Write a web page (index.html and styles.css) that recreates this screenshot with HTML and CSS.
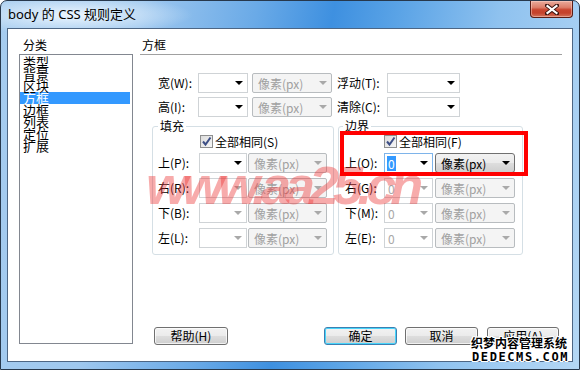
FILE: index.html
```html
<!DOCTYPE html>
<html lang="zh-CN">
<head>
<meta charset="utf-8">
<title>body 的 CSS 规则定义</title>
<link rel="stylesheet" href="styles.css">
</head>
<body>
<div class="window">
  <div class="titlebar">
    <span class="title">body 的 CSS 规则定义</span>
    <div class="close">
      <svg width="14" height="11" viewBox="0 0 14 11">
        <path d="M2 1.5 L12 9.5 M12 1.5 L2 9.5" stroke="#3a1410" stroke-width="4" stroke-linecap="square"/>
        <path d="M2.5 2 L11.5 9 M11.5 2 L2.5 9" stroke="#ffffff" stroke-width="2.2" stroke-linecap="square"/>
      </svg>
    </div>
  </div>
  <div class="client">
    <div class="side">
      <div class="cap">分类</div>
      <ul class="list">
        <li>类型</li>
        <li>背景</li>
        <li>区块</li>
        <li class="sel">方框</li>
        <li>边框</li>
        <li>列表</li>
        <li>定位</li>
        <li>扩展</li>
      </ul>
    </div>
    <div class="main">
      <div class="heading">方框</div>
      <div class="toprows">
        <div class="row">
          <span class="lbl">宽(W):</span>
          <span class="combo"><i class="arrow"></i></span>
          <span class="unit"><span>像素(px)</span><i class="arrow gray"></i></span>
          <span class="lbl lbl2">浮动(T):</span>
          <span class="combo combo-wide"><i class="arrow"></i></span>
        </div>
        <div class="row">
          <span class="lbl">高(I):</span>
          <span class="combo"><i class="arrow"></i></span>
          <span class="unit"><span>像素(px)</span><i class="arrow gray"></i></span>
          <span class="lbl lbl2">清除(C):</span>
          <span class="combo combo-wide"><i class="arrow"></i></span>
        </div>
      </div>
      <div class="groups">
        <fieldset class="group group-pad">
          <legend>填充</legend>
          <div class="chkrow"><span class="chk"><svg width="13" height="13" viewBox="0 0 13 13"><path d="M3 6.5 L5.5 9.5 L10.5 2.5" fill="none" stroke="#3d4f86" stroke-width="2"/></svg></span><span>全部相同(S)</span></div>
          <div class="row"><span class="lbl">上(P):</span><span class="combo"><i class="arrow"></i></span><span class="unit"><span>像素(px)</span><i class="arrow gray"></i></span></div>
          <div class="row"><span class="lbl">右(R):</span><span class="combo"><i class="arrow gray"></i></span><span class="unit"><span>像素(px)</span><i class="arrow gray"></i></span></div>
          <div class="row"><span class="lbl">下(B):</span><span class="combo"><i class="arrow gray"></i></span><span class="unit"><span>像素(px)</span><i class="arrow gray"></i></span></div>
          <div class="row"><span class="lbl">左(L):</span><span class="combo"><i class="arrow gray"></i></span><span class="unit"><span>像素(px)</span><i class="arrow gray"></i></span></div>
        </fieldset>
        <fieldset class="group group-mar">
          <legend>边界</legend>
          <div class="chkrow"><span class="chk"><svg width="13" height="13" viewBox="0 0 13 13"><path d="M3 6.5 L5.5 9.5 L10.5 2.5" fill="none" stroke="#3d4f86" stroke-width="2"/></svg></span><span>全部相同(F)</span></div>
          <div class="row"><span class="lbl">上(O):</span><span class="combo combo-focus"><span class="hl">0</span><i class="arrow"></i></span><span class="unit unit-on"><span>像素(px)</span><i class="arrow"></i></span></div>
          <div class="row"><span class="lbl">右(G):</span><span class="combo"><span class="val">0</span><i class="arrow gray"></i></span><span class="unit"><span>像素(px)</span><i class="arrow gray"></i></span></div>
          <div class="row"><span class="lbl">下(M):</span><span class="combo"><span class="val">0</span><i class="arrow gray"></i></span><span class="unit"><span>像素(px)</span><i class="arrow gray"></i></span></div>
          <div class="row"><span class="lbl">左(E):</span><span class="combo"><span class="val">0</span><i class="arrow gray"></i></span><span class="unit"><span>像素(px)</span><i class="arrow gray"></i></span></div>
        </fieldset>
      </div>
      <div class="buttons">
        <span class="btn btn-help">帮助(H)</span>
        <span class="btn btn-ok">确定</span>
        <span class="btn btn-cancel">取消</span>
        <span class="btn btn-apply">应用(A)</span>
      </div>
    </div>
  </div>
</div>
<div class="mark-red">www.aa25.cn</div>
<div class="annot"></div>
<div class="dede">
  <div class="dede-cn">织梦内容管理系统</div>
  <div class="dede-en">DEDECMS.COM</div>
</div>
</body>
</html>
```
FILE: styles.css
```css
* { box-sizing: border-box; }
html, body { margin: 0; padding: 0; }
body {
  width: 580px;
  height: 370px;
  overflow: hidden;
  position: relative;
  background: #fff;
  font-family: "Noto Sans CJK SC", "Noto Sans", sans-serif;
  font-size: 12px;
  color: #000;
}

.window {
  width: 580px;
  height: 370px;
  border: 1px solid #27384c;
  border-radius: 7px 7px 0 0;
  padding: 0 6px 7px 6px;
  display: flex;
  flex-direction: column;
  background:
    radial-gradient(ellipse 120px 20px at 72px 14px, rgba(240,248,255,0.95), rgba(240,248,255,0) 100%),
    linear-gradient(100deg, #a6ccef 0%, #9fc8ef 22%, #6aaae7 40%, #3e90e0 52%, #5aa3e6 62%, #8fc2ef 78%, #a8d0f3 92%, #b4d7f4 100%);
}

.titlebar {
  height: 27px;
  display: flex;
  align-items: flex-start;
  justify-content: space-between;
  flex: none;
}
.title {
  align-self: center;
  padding-left: 1px;
  font-family: "Noto Sans", "Noto Sans CJK SC", sans-serif;
  font-size: 13px;
  line-height: 27px;
  color: #000;
}
.close {
  width: 43px;
  height: 17px;
  border: 1px solid #5a1d16;
  border-top: none;
  border-radius: 0 0 4px 4px;
  background: linear-gradient(#e9ab9c 0%, #dc7e6a 40%, #c8452f 55%, #c5422c 75%, #d2735c 100%);
  box-shadow: inset 0 0 0 1px rgba(255,220,210,0.45);
  display: flex;
  align-items: center;
  justify-content: center;
}

.client {
  height: 334px;
  border: 1px solid #4d6684;
  background: #fff;
  display: flex;
  flex: none;
}

.side {
  width: 114px;
  margin-left: 11px;
  padding-top: 9px;
  display: flex;
  flex-direction: column;
}
.cap {
  line-height: 14px;
  padding-left: 4px;
  margin-bottom: 2px;
}
.list {
  margin: 0;
  padding: 1px 1px 1px 0;
  list-style: none;
  height: 290px;
  border: 1px solid #828790;
}
.list li {
  font-size: 13px;
  line-height: 12px;
  height: 12px;
  padding-left: 3px;
  margin-right: 1px;
  white-space: nowrap;
}
.list li.sel {
  background: #3399ff;
  color: #fff;
}

.main {
  width: 422px;
  margin-left: 7px;
  padding-top: 9px;
  display: flex;
  flex-direction: column;
}
.heading {
  line-height: 14px;
  padding-left: 2px;
  padding-bottom: 2px;
  border-bottom: 1px solid #a0a0a0;
}

.toprows {
  margin-top: 18px;
  padding-left: 18px;
  display: flex;
  flex-direction: column;
  gap: 4px;
}
.row {
  display: flex;
  align-items: center;
  height: 20px;
}
.lbl {
  width: 40px;
  flex: none;
  white-space: nowrap;
  line-height: 20px;
}
.lbl2 {
  width: 50px;
  margin-left: 5px;
}
.combo {
  width: 50px;
  height: 20px;
  flex: none;
  border: 1px solid #cfd3d6;
  background: #fff;
  display: flex;
  align-items: center;
  padding: 0 4px 0 2px;
}
.combo-wide { width: 73px; }
.combo .arrow { margin-left: auto; }
.combo-focus { border-color: #7eb4ea; }
.hl {
  background: #3399ff;
  color: #fff;
  line-height: 15px;
  padding: 0 1px;
}
.val {
  color: #a8a8a8;
  padding-left: 1px;
}
.arrow {
  display: block;
  width: 0;
  height: 0;
  border-left: 4px solid transparent;
  border-right: 4px solid transparent;
  border-top: 4px solid #000;
}
.arrow.gray { border-top-color: #a9a9a9; }

.unit {
  width: 80px;
  height: 20px;
  flex: none;
  margin-left: 4px;
  border: 1px solid #b8bcbf;
  border-radius: 2px;
  background: #f4f4f4;
  color: #a0a0a0;
  display: flex;
  align-items: center;
  justify-content: space-between;
  padding: 0 4px 0 5px;
  white-space: nowrap;
}
.unit-on {
  border-color: #707070;
  border-radius: 3px;
  color: #000;
  background: linear-gradient(#f2f2f2 0%, #ebebeb 48%, #dddddd 52%, #cfcfcf 100%);
}

.groups {
  margin-top: 2px;
  margin-left: 12px;
  display: flex;
  gap: 4px;
}
.group {
  margin: 0;
  height: 136px;
  border: 1px solid #d5dfe5;
  border-radius: 3px;
  padding: 0 0 6px 5px;
  display: flex;
  flex-direction: column;
  gap: 5px;
}
.group legend {
  padding: 0 2px;
  line-height: 14px;
}
.group-pad { width: 182px; }
.group-mar { width: 185px; padding-left: 6px; }
.group-mar legend { margin-left: -2px; }
.group-pad .lbl { width: 41px; }
.group-pad .combo { width: 48px; }
.group-pad .unit { width: 79px; margin-left: 1px; }
.group-mar .lbl { width: 39px; }
.group-mar .combo { width: 49px; }
.group-mar .unit { margin-left: 2px; }

.chkrow {
  height: 16px;
  display: flex;
  align-items: center;
  margin-bottom: -1px;
}
.group-pad .chkrow { padding-left: 42px; }
.group-mar .chkrow { padding-left: 39px; }
.chk {
  width: 13px;
  height: 13px;
  border: 1px solid #8e8f8f;
  background: linear-gradient(135deg, #dcdcdc, #f6f6f6);
  margin-right: 2px;
  display: flex;
  align-items: center;
  justify-content: center;
}
.chk svg { display: block; margin: -1px; }

.buttons {
  margin-top: 72px;
  padding-left: 14px;
  display: flex;
}
.btn {
  height: 18px;
  width: 73px;
  border: 1px solid #707070;
  border-radius: 3px;
  background: linear-gradient(#f2f2f2 0%, #ebebeb 48%, #dddddd 52%, #cfcfcf 100%);
  box-shadow: inset 0 0 0 1px rgba(255,255,255,0.7);
  display: flex;
  align-items: center;
  justify-content: center;
  line-height: 16px;
  white-space: nowrap;
}
.btn-help { width: 74px; }
.btn-ok {
  margin-left: 96px;
  border-color: #3c7fb1;
  box-shadow: inset 0 0 0 1px #48d5fb;
}
.btn-cancel { margin-left: 8px; }
.btn-apply { margin-left: 9px; width: 72px; }

.mark-red {
  position: absolute;
  left: 146px;
  top: 157px;
  font-family: "Liberation Sans", Arial, sans-serif;
  font-size: 54px;
  font-weight: bold;
  font-style: italic;
  letter-spacing: -6px;
  line-height: 56px;
  color: rgba(235, 55, 55, 0.42);
  pointer-events: none;
}
.annot {
  position: absolute;
  left: 340px;
  top: 131px;
  width: 188px;
  height: 45px;
  border: 4px solid #ff0000;
}
.dede {
  position: absolute;
  left: 471px;
  top: 335px;
  color: #000;
  font-weight: bold;
  text-shadow: 1px 0 #fff, -1px 0 #fff, 0 1px #fff, 0 -1px #fff, 1px 1px #fff, -1px -1px #fff, 1px -1px #fff, -1px 1px #fff;
}
.dede-cn {
  font-size: 12px;
  line-height: 15px;
  letter-spacing: 0;
}
.dede-en {
  font-family: "DejaVu Sans Mono", monospace;
  font-size: 12px;
  line-height: 14px;
  letter-spacing: 1.6px;
  padding-left: 1px;
}
```
